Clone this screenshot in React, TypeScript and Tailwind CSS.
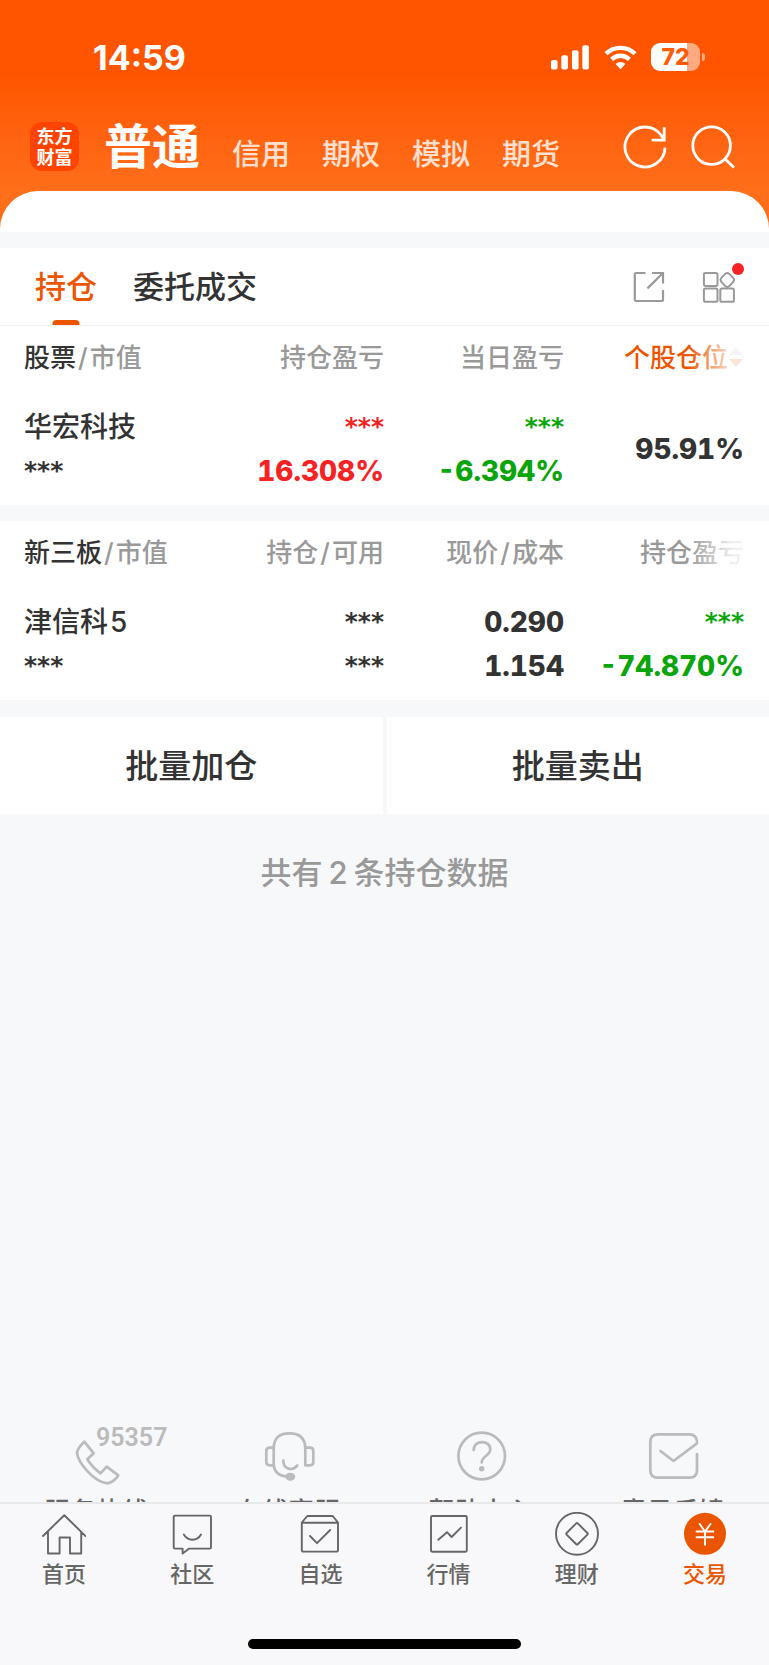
import { useState } from "react";
import type { ReactNode } from "react";

type Cell = { text: string; tone?: "up" | "down" };
type Holding = { name: ReactNode; value: string; cells: Cell[][] };

const accounts = ["普通", "信用", "期权", "模拟", "期货"];

const stocks: Holding[] = [
  {
    name: "华宏科技",
    value: "***",
    cells: [
      [{ text: "***", tone: "up" }, { text: "16.308%", tone: "up" }],
      [{ text: "***", tone: "down" }, { text: "-6.394%", tone: "down" }],
      [{ text: "95.91%" }],
    ],
  },
];

const otcStocks: Holding[] = [
  {
    name: <>津信科<span className="ml-0.5">5</span></>,
    value: "***",
    cells: [
      [{ text: "***" }, { text: "***" }],
      [{ text: "0.290" }, { text: "1.154" }],
      [{ text: "***", tone: "down" }, { text: "-74.870%", tone: "down" }],
    ],
  },
];

const services = [
  {
    label: "服务热线",
    icon: (
      <>
        <path d="M32.3 17.7 41.7 29.3 35.3 35.3Q40 43 48.5 49.3L54.7 42.7 66.3 51.3Q62 58.5 55.3 59.3C42 58 26 39 25 28.7Q26 23.5 32.3 17.7Z" />
        <text x="44" y="22" fill="#bbb" stroke="none" className="font-[Roboto] text-[25px] font-semibold">
          95357
        </text>
      </>
    ),
  },
  {
    label: "在线客服",
    icon: (
      <>
        <path d="M29.7 42V24.5Q29.7 9.3 45.5 9.3T61.3 24.5V41.3H66Q69.3 41.3 69.3 38V27Q69.3 23.7 66 23.7H61.3" />
        <path d="M29.7 23.7H26Q22.3 23.7 22.3 27V38Q22.3 41.3 26 41.3H29.7Q31 51.5 43 52.7" />
        <path d="M39.3 36.5C39.5 45.5 48 47.5 53.3 41.5" />
        <ellipse cx="46.3" cy="52.7" rx="3.6" ry="2.6" fill="#bbb" />
      </>
    ),
  },
  {
    label: "帮助中心",
    icon: (
      <>
        <circle cx="44.7" cy="32" r="23.3" />
        <path d="M36.7 26C36.7 15.5 53.3 15.5 53.3 25.5C53.3 31.5 44.7 32 44.7 38.5" />
        <circle cx="44.7" cy="44.7" r="2.7" fill="#bbb" stroke="none" />
      </>
    ),
  },
  {
    label: "意见反馈",
    icon: <path d="M68 30V46Q68 53.7 60.3 53.7H29Q21.3 53.7 21.3 46V18Q21.3 10.3 29 10.3H60.3Q68 10.3 68 18.5V19.3L44.5 37 31.5 27" />,
  },
];

const navItems = [
  { label: "首页", icon: <path d="M1 24 22.3 3.2 43.5 24M6 20V41.5H17.6V25.5H28V41.5H39.2V20" /> },
  {
    label: "社区",
    icon: (
      <>
        <path d="M5 3.6H39.7Q41 3.6 41 5V35.3Q41 36.6 39.7 36.6H19.2L12.6 41.6V36.6H5Q3.7 36.6 3.7 35.3V5Q3.7 3.6 5 3.6Z" />
        <path d="M13.8 22.5C18 29.5 27 29.5 31 22.5" />
      </>
    ),
  },
  {
    label: "自选",
    icon: (
      <>
        <path d="M9.3 4H34.7L40 10.5V38Q40 39.6 38.4 39.6H5.4Q3.8 39.6 3.8 38V10.5ZM4 10.7H40" />
        <path d="M12 24 19 31.2 32.2 18" />
      </>
    ),
  },
  {
    label: "行情",
    icon: (
      <>
        <rect x="4" y="4" width="35.8" height="35.8" rx="1.2" />
        <path d="M11.3 27.8 20 20.2 24.6 25 34 15.6" />
      </>
    ),
  },
  {
    label: "理财",
    icon: (
      <>
        <circle cx="22" cy="21.8" r="21" />
        <path d="M21 11.6Q22 10.6 23 11.6L32.4 21Q33.2 21.8 32.4 22.6L23 32Q22 33 21 32L11.6 22.6Q10.8 21.8 11.6 21Z" />
      </>
    ),
  },
  {
    label: "交易",
    active: true,
    icon: (
      <>
        <circle cx="22" cy="21.8" r="21" fill="#ec5500" stroke="none" />
        <path stroke="#fff" d="M16.7 12 22 19.5 27.5 12M22 19.5V32.8M13.5 19.5H30.3M13.5 25.3H30.3" />
      </>
    ),
  },
];

function StatusBar() {
  return (
    <div className="flex h-[114px] items-center justify-between pl-[93px] pr-16 text-white">
      <span className="text-[34px] font-bold">14:59</span>
      <div className="flex items-center gap-[14px]">
        <svg width="40" height="28" viewBox="0 0 40 28" fill="currentColor" aria-hidden="true">
          <rect x="1" y="17" width="6.6" height="9.4" rx="2" />
          <rect x="11.3" y="12.3" width="6.6" height="14.1" rx="2" />
          <rect x="22" y="7.3" width="6.6" height="19.1" rx="2" />
          <rect x="32.3" y="2.3" width="6.6" height="24.1" rx="2" />
        </svg>
        <svg width="33" height="28" viewBox="0 0 34 28" aria-hidden="true">
          <g fill="none" stroke="currentColor" strokeWidth="4.6">
            <path d="M2 10.6C10.5 2.6 23.5 2.6 32 10.6" />
            <path d="M7.8 16.4C13.2 11.4 20.8 11.4 26.2 16.4" />
          </g>
          <path fill="currentColor" d="M17 26.6 11.9 21.3C14.8 18.5 19.2 18.5 22.1 21.3Z" />
        </svg>
        <div className="flex items-center gap-0.5">
          <div className="flex h-7 w-[49px] items-center justify-center rounded-[9px] bg-linear-to-r from-white from-73% to-white/50 to-73%">
            <span className="text-[23px] font-extrabold leading-none text-[#ff5a05]">72</span>
          </div>
          <div className="h-2 w-[3px] rounded-r-full bg-white/50" />
        </div>
      </div>
    </div>
  );
}

function Header() {
  const [account, setAccount] = useState("普通");
  return (
    <header className="bg-linear-to-b from-[#ff5500] from-32% to-[#ff6e19] to-82%">
      <StatusBar />
      <div className="flex h-[77px] items-start pl-[30px] pr-[34px]">
        <div className="mt-2 flex size-[49px] shrink-0 items-center justify-center rounded-xl bg-[#ff4400] text-center text-lg font-bold leading-[21px] text-white">
          东方
          <br />
          财富
        </div>
        <div className="ml-[25px] flex flex-1 items-end gap-8 pt-px">
          {accounts.map((name) => (
            <button
              key={name}
              type="button"
              onClick={() => setAccount(name)}
              className={
                account === name
                  ? "text-5xl leading-16 font-bold text-white"
                  : "text-[29px] leading-12 font-medium text-white/80"
              }
            >
              {name}
            </button>
          ))}
        </div>
        <div className="mt-[11px] flex gap-6 text-white">
          <button type="button" aria-label="刷新">
            <svg width="44" height="44" viewBox="0 0 44 44" fill="none" stroke="currentColor" strokeWidth="2.8">
              <path d="M42 22.6A20 20 0 1 1 38 10L41 15M41.2 2.2V15.2H28.6" />
            </svg>
          </button>
          <button type="button" aria-label="搜索">
            <svg width="44" height="44" viewBox="0 0 44 44" fill="none" stroke="currentColor" strokeWidth="2.8">
              <circle cx="20.6" cy="20.6" r="18.8" />
              <path d="M34 34 43 42.6" />
            </svg>
          </button>
        </div>
      </div>
      <div className="h-[41px] rounded-t-[38px] bg-white" />
    </header>
  );
}

function Tabs() {
  const [tab, setTab] = useState("持仓");
  return (
    <div className="mt-4 flex h-[78px] items-center justify-between border-b border-[#f0f0f2] bg-white pl-[35px] pr-[33px]">
      <div className="flex h-full gap-9">
        {["持仓", "委托成交"].map((name) => (
          <button
            key={name}
            type="button"
            onClick={() => setTab(name)}
            className={
              tab === name
                ? "relative pt-0.5 text-[31px] font-medium text-[#ec5500]"
                : "relative pt-0.5 text-[31px] font-medium text-[#333]"
            }
          >
            {name}
            {tab === name && (
              <span className="absolute bottom-0 left-1/2 h-[5px] w-[27px] -translate-x-1/2 rounded-t-sm bg-[#ec5500]" />
            )}
          </button>
        ))}
      </div>
      <div className="flex items-center gap-[37px] text-[#999]">
        <button type="button" aria-label="分享">
          <svg width="32" height="32" viewBox="0 0 32 32" fill="none" stroke="currentColor" strokeWidth="2.2">
            <path d="M12.5 2H3Q1.8 2 1.8 3V29Q1.8 30 3 30H28.8Q30 30 30 29V19M19 2H30V12.5M30 2 14.4 17.4" />
          </svg>
        </button>
        <button type="button" aria-label="更多功能" className="relative">
          <svg width="34" height="32" viewBox="0 0 34 32" fill="none" stroke="currentColor" strokeWidth="2">
            <rect x="1.9" y="1.9" width="13.6" height="13" rx="1.6" />
            <rect x="1.9" y="17.6" width="13.6" height="13.2" rx="1.6" />
            <rect x="18.3" y="17.6" width="13.6" height="13.2" rx="1.6" />
            <path d="M23.6 2.6Q25.3 1.6 27 2.6L31 6.6Q33 8.8 31 11.2L27 15.4Q25.3 16.4 23.6 15.4L19.6 11.2Q17.6 8.8 19.6 6.6Z" />
          </svg>
          <span className="absolute -right-2 -top-2 size-3 rounded-full bg-[#f52323]" />
        </button>
      </div>
    </div>
  );
}

function Hidden() {
  return <span className="block font-['DejaVu_Sans'] text-[25px] leading-[44px] font-bold">***</span>;
}

function HoldingTable({
  title,
  columns,
  rows,
}: {
  title: string;
  columns: ReactNode[];
  rows: Holding[];
}) {
  return (
    <section className="bg-white pl-6 pr-[25px] pb-3">
      <table className="w-full table-fixed">
        <thead>
          <tr className="h-[62px] whitespace-nowrap text-[26px] text-[#999]">
            <th className="text-left font-medium">
              <span className="text-[#333]">{title}</span>
              <span className="mx-0.5">/</span>市值
            </th>
            {columns.map((column, i) => (
              <th key={i} className="relative text-right font-medium">
                {column}
                {i === columns.length - 1 && (
                  <span className="pointer-events-none absolute inset-y-0 right-0 w-14 bg-linear-to-l from-white from-20% to-transparent opacity-85" />
                )}
              </th>
            ))}
          </tr>
        </thead>
        <tbody>
          {rows.map((row, n) => (
            <tr key={n} className="text-[28px] leading-[44px] text-[#333]">
              <td className="pt-[17px]">
                <div className="font-medium">{row.name}</div>
                {row.value === "***" ? <Hidden /> : row.value}
              </td>
              {row.cells.map((cell, i) => (
                <td key={i} className="pt-[17px] text-right font-extrabold tabular-nums">
                  {cell.map((line, j) => (
                    <div
                      key={j}
                      className={
                        line.tone === "up" ? "text-[#f52323]" : line.tone === "down" ? "text-[#0aa50a]" : ""
                      }
                    >
                      {line.text === "***" ? <Hidden /> : line.text}
                    </div>
                  ))}
                </td>
              ))}
            </tr>
          ))}
        </tbody>
      </table>
    </section>
  );
}

function Services() {
  return (
    <div className="mt-auto flex h-[78px] overflow-hidden">
      {services.map((item) => (
        <a key={item.label} href="#" className="flex flex-1 flex-col items-center text-[26px] leading-9 text-[#666]">
          <svg
            width="88"
            height="64"
            viewBox="0 0 88 64"
            fill="none"
            stroke="#bbb"
            strokeWidth="2.7"
            strokeLinecap="round"
            strokeLinejoin="round"
            className="shrink-0 overflow-visible"
          >
            {item.icon}
          </svg>
          <span className="mt-1.5 font-medium">{item.label}</span>
        </a>
      ))}
    </div>
  );
}

function BottomNav() {
  return (
    <footer className="border-t-2 border-[#e9e9eb] bg-[#f8f8fa] pb-4">
      <nav className="flex pt-2">
        {navItems.map((item) => (
          <a
            key={item.label}
            href="#"
            className={
              item.active
                ? "flex flex-1 flex-col items-center gap-1 text-[22px] leading-7 font-medium text-[#ec5500]"
                : "flex flex-1 flex-col items-center gap-1 text-[22px] leading-7 font-medium text-[#666]"
            }
          >
            <svg
              width="44"
              height="44"
              viewBox="0 0 44 44"
              fill="none"
              stroke="currentColor"
              strokeWidth="1.9"
              strokeLinecap="round"
              strokeLinejoin="round"
            >
              {item.icon}
            </svg>
            {item.label}
          </a>
        ))}
      </nav>
      <div className="mx-auto mt-[51px] h-[10px] w-[273px] rounded-full bg-black" />
    </footer>
  );
}

export default function App() {
  return (
    <div className="flex min-h-screen flex-col bg-[#f7f8fa] font-[Inter,'Noto_Sans_CJK_SC',sans-serif]">
      <Header />
      <main className="flex flex-1 flex-col">
        <Tabs />
        <HoldingTable
          title="股票"
          rows={stocks}
          columns={[
            "持仓盈亏",
            "当日盈亏",
            <button type="button" className="inline-flex items-center font-medium text-[#ec5500]">
              个股仓位
              <svg width="16" height="22" viewBox="0 0 16 22" aria-hidden="true">
                <path d="M8 1 15 9H1Z" fill="#bbb" />
                <path d="M8 21 1 13H15Z" fill="#ec5500" />
              </svg>
            </button>,
          ]}
        />
        <div className="h-4" />
        <HoldingTable
          title="新三板"
          rows={otcStocks}
          columns={[
            <>持仓<span className="mx-0.5">/</span>可用</>,
            <>现价<span className="mx-0.5">/</span>成本</>,
            "持仓盈亏",
          ]}
        />
        <div className="mt-[17px] flex gap-1 text-[33px] font-medium text-[#333]">
          <button type="button" className="h-[97px] flex-1 bg-white pt-0.5">
            批量加仓
          </button>
          <button type="button" className="h-[97px] flex-1 bg-white pt-0.5">
            批量卖出
          </button>
        </div>
        <p className="mt-[37px] text-center text-[31px] leading-[44px] font-medium text-[#999]">
          共有<span className="mx-1.5">2</span>条持仓数据
        </p>
        <Services />
      </main>
      <BottomNav />
    </div>
  );
}
